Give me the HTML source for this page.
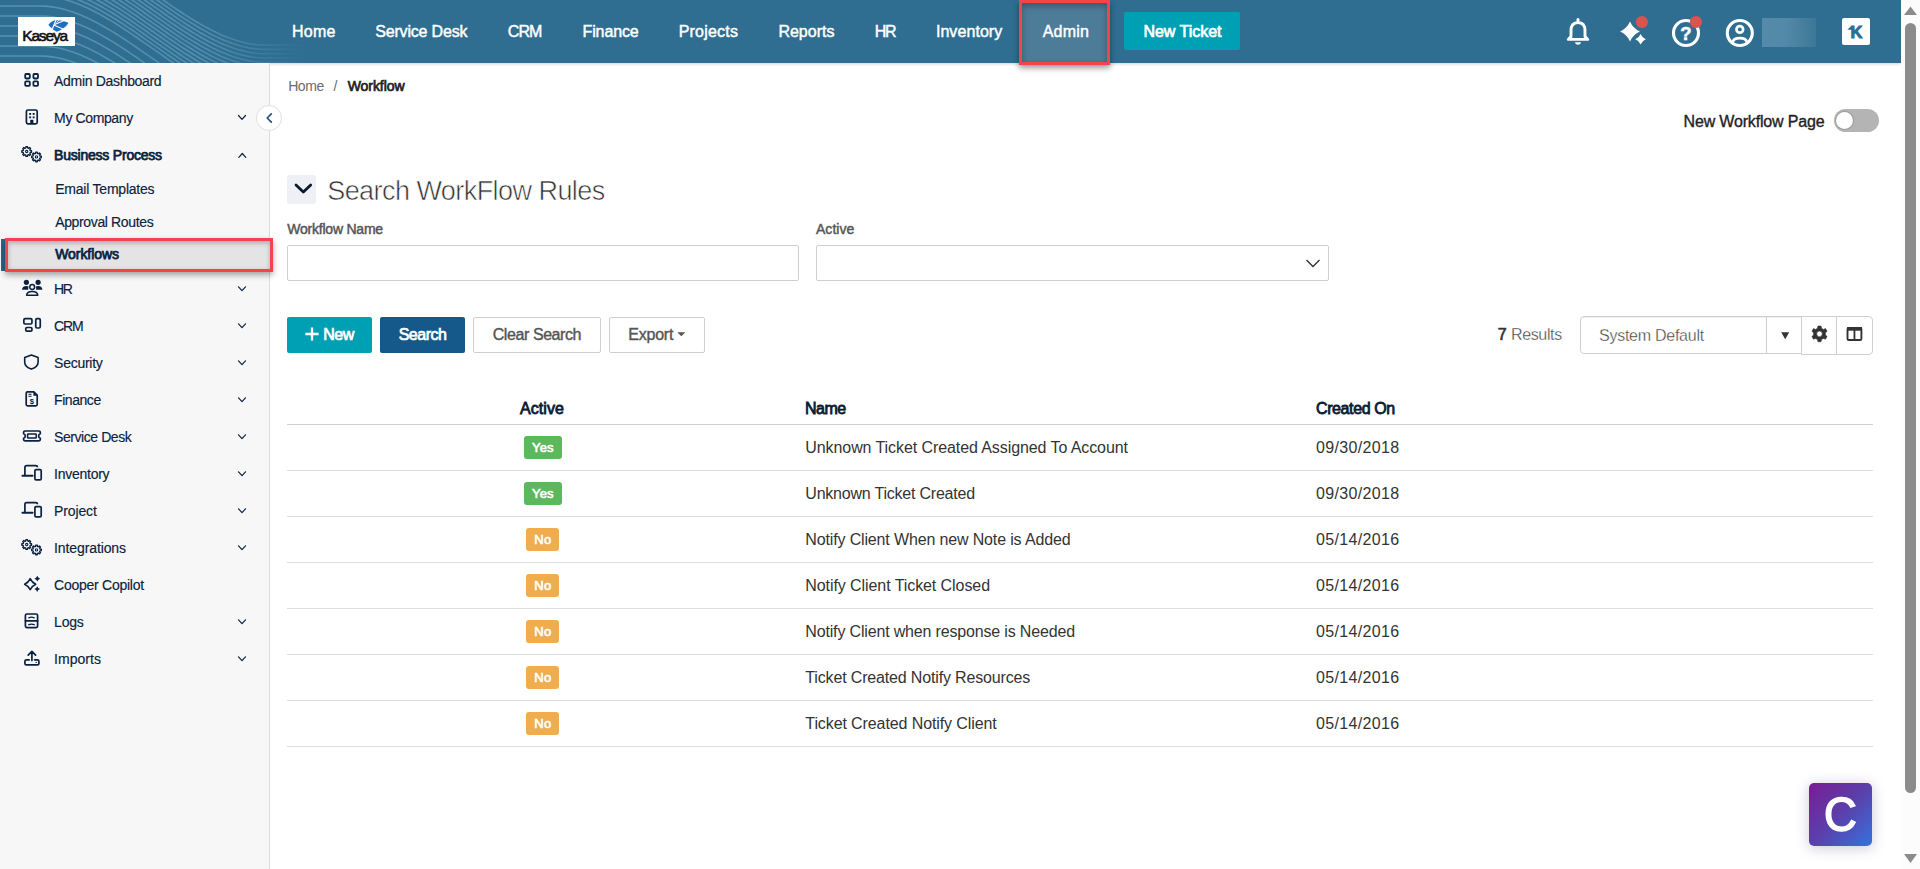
<!DOCTYPE html>
<html lang="en">
<head>
<meta charset="utf-8">
<title>Workflow</title>
<style>
html,body{margin:0;padding:0;}
body{width:1920px;height:869px;overflow:hidden;position:relative;background:#fff;font-family:"Liberation Sans",sans-serif;}
.t{position:absolute;white-space:nowrap;display:block;}
.abs{position:absolute;}
#hdr{left:0;top:0;width:1901px;height:63px;background:#2f6e91;box-shadow:0 1px 3px rgba(0,0,0,.18);}
#side{left:0;top:63px;width:269px;height:806px;background:#f7f7f7;border-right:1px solid #dcdcdc;}
.btn{position:absolute;box-sizing:border-box;border-radius:2px;}
.line{position:absolute;left:287px;width:1586px;height:1px;background:#dedede;}
.badge{position:absolute;border-radius:3px;}
svg{position:absolute;overflow:visible;}
.ic{fill:none;stroke:#0a2240;stroke-width:1.7;stroke-linecap:round;stroke-linejoin:round;}
.chev{fill:none;stroke:#0a2240;stroke-width:1.2;stroke-linecap:round;stroke-linejoin:round;}
</style>
</head>
<body>
<!-- header -->
<div id="hdr" class="abs"></div>
<svg style="left:0;top:0" width="340" height="63" viewBox="0 0 340 63"><defs><linearGradient id="wf" x1="0" x2="1" y1="0" y2="0"><stop offset="0" stop-color="#fff" stop-opacity="1"/><stop offset="0.6" stop-color="#fff" stop-opacity="0.9"/><stop offset="0.9" stop-color="#fff" stop-opacity="0"/></linearGradient><mask id="wm"><rect x="0" y="0" width="340" height="63" fill="url(#wf)"/></mask><clipPath id="wc"><rect x="0" y="0" width="340" height="63"/></clipPath></defs><g clip-path="url(#wc)"><g mask="url(#wm)" fill="none" stroke="#9fd0ea" stroke-opacity="0.36" stroke-width="1.6"><path d="M-4 56.0 L0 56.0 L4 56.0 L8 56.0 L12 56.0 L16 56.0 L20 56.0 L24 56.0 L28 56.0 L32 56.0 L36 56.0 L40 56.0 L44 56.1 L48 56.4 L52 56.9 L56 57.5 L60 58.3 L64 59.3 L68 60.5 L72 61.8 L76 63.2 L80 64.8 L84 66.5 L88 68.3"/><path d="M-4 46.0 L0 46.0 L4 46.0 L8 46.0 L12 46.0 L16 46.0 L20 46.0 L24 46.0 L28 46.0 L32 46.0 L36 46.0 L40 46.0 L44 46.1 L48 46.4 L52 46.9 L56 47.5 L60 48.3 L64 49.3 L68 50.5 L72 51.8 L76 53.2 L80 54.8 L84 56.5 L88 58.3 L92 60.2 L96 62.3 L100 64.4 L104 66.7 L108 69.0"/><path d="M-4 36.0 L0 36.0 L4 36.0 L8 36.0 L12 36.0 L16 36.0 L20 36.0 L24 36.0 L28 36.0 L32 36.0 L36 36.0 L40 36.0 L44 36.1 L48 36.4 L52 36.9 L56 37.5 L60 38.3 L64 39.3 L68 40.5 L72 41.8 L76 43.2 L80 44.8 L84 46.5 L88 48.3 L92 50.2 L96 52.3 L100 54.4 L104 56.7 L108 59.0 L112 61.4 L116 63.8 L120 66.4 L124 69.0"/><path d="M-4 26.0 L0 26.0 L4 26.0 L8 26.0 L12 26.0 L16 26.0 L20 26.0 L24 26.0 L28 26.0 L32 26.0 L36 26.0 L40 26.0 L44 26.1 L48 26.4 L52 26.9 L56 27.5 L60 28.3 L64 29.3 L68 30.5 L72 31.8 L76 33.2 L80 34.8 L84 36.5 L88 38.3 L92 40.2 L96 42.3 L100 44.4 L104 46.7 L108 49.0 L112 51.4 L116 53.8 L120 56.4 L124 59.0 L128 61.6 L132 64.3 L136 67.0 L140 69.8"/><path d="M-4 16.0 L0 16.0 L4 16.0 L8 16.0 L12 16.0 L16 16.0 L20 16.0 L24 16.0 L28 16.0 L32 16.0 L36 16.0 L40 16.0 L44 16.1 L48 16.4 L52 16.9 L56 17.5 L60 18.3 L64 19.3 L68 20.5 L72 21.8 L76 23.2 L80 24.8 L84 26.5 L88 28.3 L92 30.2 L96 32.3 L100 34.4 L104 36.7 L108 39.0 L112 41.4 L116 43.8 L120 46.4 L124 49.0 L128 51.6 L132 54.3 L136 57.0 L140 59.8 L144 62.6 L148 65.4 L152 68.2"/><path d="M-4 6.0 L0 6.0 L4 6.0 L8 6.0 L12 6.0 L16 6.0 L20 6.0 L24 6.0 L28 6.0 L32 6.0 L36 6.0 L40 6.0 L44 6.1 L48 6.4 L52 6.9 L56 7.5 L60 8.3 L64 9.3 L68 10.5 L72 11.8 L76 13.2 L80 14.8 L84 16.5 L88 18.3 L92 20.2 L96 22.3 L100 24.4 L104 26.7 L108 29.0 L112 31.4 L116 33.8 L120 36.4 L124 39.0 L128 41.6 L132 44.3 L136 47.0 L140 49.8 L144 52.6 L148 55.4 L152 58.2 L156 60.9 L160 63.7 L164 66.5 L168 69.3"/><path d="M-4 -4.0 L0 -4.0 L4 -4.0 L8 -4.0 L12 -4.0 L16 -4.0 L20 -4.0 L24 -4.0 L28 -4.0 L32 -4.0 L36 -4.0 L40 -4.0 L44 -3.9 L48 -3.6 L52 -3.1 L56 -2.5 L60 -1.7 L64 -0.7 L68 0.5 L72 1.8 L76 3.2 L80 4.8 L84 6.5 L88 8.3 L92 10.2 L96 12.3 L100 14.4 L104 16.7 L108 19.0 L112 21.4 L116 23.8 L120 26.4 L124 29.0 L128 31.6 L132 34.3 L136 37.0 L140 39.8 L144 42.6 L148 45.4 L152 48.2 L156 50.9 L160 53.7 L164 56.5 L168 59.3 L172 62.0 L176 64.7 L180 67.4 L184 70.0"/><path d="M60 -6.0 L64 -5.0 L68 -3.8 L72 -2.5 L76 -1.1 L80 0.5 L84 2.2 L88 4.0 L92 5.9 L96 8.0 L100 10.1 L104 12.4 L108 14.7 L112 17.1 L116 19.5 L120 22.1 L124 24.7 L128 27.3 L132 30.0 L136 32.7 L140 35.5 L144 38.3 L148 41.1 L152 43.9 L156 46.6 L160 49.4 L164 52.2 L168 55.0 L172 57.7 L176 60.4 L180 63.1 L184 65.7 L188 68.2"/><path d="M76 -5.4 L80 -3.8 L84 -2.1 L88 -0.3 L92 1.6 L96 3.7 L100 5.8 L104 8.1 L108 10.4 L112 12.8 L116 15.2 L120 17.8 L124 20.4 L128 23.0 L132 25.7 L136 28.4 L140 31.2 L144 34.0 L148 36.8 L152 39.6 L156 42.3 L160 45.1 L164 47.9 L168 50.7 L172 53.4 L176 56.1 L180 58.8 L184 61.4 L188 63.9 L192 66.4 L196 68.8"/><path d="M88 -4.6 L92 -2.7 L96 -0.6 L100 1.5 L104 3.8 L108 6.1 L112 8.5 L116 10.9 L120 13.5 L124 16.1 L128 18.7 L132 21.4 L136 24.1 L140 26.9 L144 29.7 L148 32.5 L152 35.3 L156 38.0 L160 40.8 L164 43.6 L168 46.4 L172 49.1 L176 51.8 L180 54.5 L184 57.1 L188 59.6 L192 62.1 L196 64.5 L200 66.9 L204 69.1"/><path d="M96 -4.9 L100 -2.8 L104 -0.5 L108 1.8 L112 4.2 L116 6.6 L120 9.2 L124 11.8 L128 14.4 L132 17.1 L136 19.8 L140 22.6 L144 25.4 L148 28.2 L152 31.0 L156 33.7 L160 36.5 L164 39.3 L168 42.1 L172 44.8 L176 47.5 L180 50.2 L184 52.8 L188 55.3 L192 57.8 L196 60.2 L200 62.6 L204 64.8 L208 67.0 L212 69.1"/><path d="M104 -4.8 L108 -2.5 L112 -0.1 L116 2.3 L120 4.9 L124 7.5 L128 10.1 L132 12.8 L136 15.5 L140 18.3 L144 21.1 L148 23.9 L152 26.7 L156 29.4 L160 32.2 L164 35.0 L168 37.8 L172 40.5 L176 43.2 L180 45.9 L184 48.5 L188 51.0 L192 53.5 L196 55.9 L200 58.3 L204 60.5 L208 62.7 L212 64.8 L216 66.7 L220 68.6"/><path d="M112 -4.4 L116 -2.0 L120 0.6 L124 3.2 L128 5.8 L132 8.5 L136 11.2 L140 14.0 L144 16.8 L148 19.6 L152 22.4 L156 25.1 L160 27.9 L164 30.7 L168 33.5 L172 36.2 L176 38.9 L180 41.6 L184 44.2 L188 46.7 L192 49.2 L196 51.6 L200 54.0 L204 56.2 L208 58.4 L212 60.5 L216 62.4 L220 64.3 L224 66.0 L228 67.6 L232 69.1"/><path d="M120 -3.7 L124 -1.1 L128 1.5 L132 4.2 L136 6.9 L140 9.7 L144 12.5 L148 15.3 L152 18.1 L156 20.8 L160 23.6 L164 26.4 L168 29.2 L172 31.9 L176 34.6 L180 37.3 L184 39.9 L188 42.4 L192 44.9 L196 47.3 L200 49.7 L204 51.9 L208 54.1 L212 56.2 L216 58.1 L220 60.0 L224 61.7 L228 63.3 L232 64.8 L236 66.1 L240 67.3 L244 68.3 L248 69.2 L252 69.9"/><path d="M124 -5.4 L128 -2.8 L132 -0.1 L136 2.6 L140 5.4 L144 8.2 L148 11.0 L152 13.8 L156 16.5 L160 19.3 L164 22.1 L168 24.9 L172 27.6 L176 30.3 L180 33.0 L184 35.6 L188 38.1 L192 40.6 L196 43.0 L200 45.4 L204 47.6 L208 49.8 L212 51.9 L216 53.8 L220 55.7 L224 57.4 L228 59.0 L232 60.5 L236 61.8 L240 63.0 L244 64.0 L248 64.9 L252 65.6 L256 66.1 L260 66.4 L264 66.6 L268 66.6 L272 66.6 L276 66.6 L280 66.6 L284 66.6 L288 66.6 L292 66.6 L296 66.6 L300 66.6 L304 66.6 L308 66.6 L312 66.6 L316 66.6 L320 66.6 L324 66.6 L328 66.6"/><path d="M132 -4.4 L136 -1.7 L140 1.1 L144 3.9 L148 6.7 L152 9.5 L156 12.2 L160 15.0 L164 17.8 L168 20.6 L172 23.3 L176 26.0 L180 28.7 L184 31.3 L188 33.8 L192 36.3 L196 38.7 L200 41.1 L204 43.3 L208 45.5 L212 47.6 L216 49.5 L220 51.4 L224 53.1 L228 54.7 L232 56.2 L236 57.5 L240 58.7 L244 59.7 L248 60.6 L252 61.3 L256 61.8 L260 62.1 L264 62.3 L268 62.3 L272 62.3 L276 62.3 L280 62.3 L284 62.3 L288 62.3 L292 62.3 L296 62.3 L300 62.3 L304 62.3 L308 62.3 L312 62.3 L316 62.3 L320 62.3 L324 62.3 L328 62.3"/><path d="M136 -6.0 L140 -3.2 L144 -0.4 L148 2.4 L152 5.2 L156 7.9 L160 10.7 L164 13.5 L168 16.3 L172 19.0 L176 21.7 L180 24.4 L184 27.0 L188 29.5 L192 32.0 L196 34.4 L200 36.8 L204 39.0 L208 41.2 L212 43.3 L216 45.2 L220 47.1 L224 48.8 L228 50.4 L232 51.9 L236 53.2 L240 54.4 L244 55.4 L248 56.3 L252 57.0 L256 57.5 L260 57.8 L264 58.0 L268 58.0 L272 58.0 L276 58.0 L280 58.0 L284 58.0 L288 58.0 L292 58.0 L296 58.0 L300 58.0 L304 58.0 L308 58.0 L312 58.0 L316 58.0 L320 58.0 L324 58.0 L328 58.0"/><path d="M144 -4.7 L148 -1.9 L152 0.9 L156 3.6 L160 6.4 L164 9.2 L168 12.0 L172 14.7 L176 17.4 L180 20.1 L184 22.7 L188 25.2 L192 27.7 L196 30.1 L200 32.5 L204 34.7 L208 36.9 L212 39.0 L216 40.9 L220 42.8 L224 44.5 L228 46.1 L232 47.6 L236 48.9 L240 50.1 L244 51.1 L248 52.0 L252 52.7 L256 53.2 L260 53.5 L264 53.7 L268 53.7 L272 53.7 L276 53.7 L280 53.7 L284 53.7 L288 53.7 L292 53.7 L296 53.7 L300 53.7 L304 53.7 L308 53.7 L312 53.7 L316 53.7 L320 53.7 L324 53.7 L328 53.7"/><path d="M152 -3.4 L156 -0.7 L160 2.1 L164 4.9 L168 7.7 L172 10.4 L176 13.1 L180 15.8 L184 18.4 L188 20.9 L192 23.4 L196 25.8 L200 28.2 L204 30.4 L208 32.6 L212 34.7 L216 36.6 L220 38.5 L224 40.2 L228 41.8 L232 43.3 L236 44.6 L240 45.8 L244 46.8 L248 47.7 L252 48.4 L256 48.9 L260 49.2 L264 49.4 L268 49.4 L272 49.4 L276 49.4 L280 49.4 L284 49.4 L288 49.4 L292 49.4 L296 49.4 L300 49.4 L304 49.4 L308 49.4 L312 49.4 L316 49.4 L320 49.4 L324 49.4 L328 49.4"/><path d="M156 -5.0 L160 -2.2 L164 0.6 L168 3.4 L172 6.1 L176 8.8 L180 11.5 L184 14.1 L188 16.6 L192 19.1 L196 21.5 L200 23.9 L204 26.1 L208 28.3 L212 30.4 L216 32.3 L220 34.2 L224 35.9 L228 37.5 L232 39.0 L236 40.3 L240 41.5 L244 42.5 L248 43.4 L252 44.1 L256 44.6 L260 44.9 L264 45.1 L268 45.1 L272 45.1 L276 45.1 L280 45.1 L284 45.1 L288 45.1 L292 45.1 L296 45.1 L300 45.1 L304 45.1 L308 45.1 L312 45.1 L316 45.1 L320 45.1 L324 45.1 L328 45.1"/></g></g></svg>
<div class="abs" style="left:1019px;top:0px;width:91px;height:65px;box-sizing:border-box;border:3px solid #f2444a;background:#4d7c99;box-shadow:0 3px 6px rgba(0,0,0,.4), inset 0 3px 6px rgba(0,0,0,.3);"></div>
<div class="btn" style="left:1124px;top:12px;width:116px;height:38px;background:#00a0b4;border-radius:2px;"></div>
<!-- logo -->
<div class="abs" style="left:18px;top:17px;width:57px;height:29px;background:#fff;"></div>
<svg style="left:0;top:0" width="100" height="63"><path d="M48.4 24.8 Q50.2 21.6 55.5 19.9 Q62.9 20.2 68.5 22.7 Q67.2 25.9 62.4 29.1 Q59.2 31.2 56.6 31.7 Q53.4 30.2 51.8 28.3 Q49.4 26.4 48.4 24.8Z" fill="#1f6fbf"/><path d="M56.3 19.4 L52.3 28.9" stroke="#fff" stroke-width="1.2" fill="none"/><path d="M54.6 24.4 L64.2 20.4" stroke="#fff" stroke-width="1.1" fill="none"/><path d="M54.2 25.3 L63.6 29.2" stroke="#fff" stroke-width="1.1" fill="none"/><path d="M56.6 22.4 L59.6 19.8" stroke="#fff" stroke-width="0.9" fill="none"/></svg>
<svg style="left:0;top:0" width="1901" height="66"><path d="M1578 19.6 V21.5" fill="none" stroke="#fff" stroke-width="3" stroke-linecap="round"/><path d="M1568.2 39.4 L1571 36.4 V30.6 Q1571 22.6 1578 22.6 Q1585 22.6 1585 30.6 V36.4 L1587.8 39.4Z" fill="none" stroke="#fff" stroke-width="2.9" stroke-linejoin="round"/><path d="M1574.9 42.3 H1581.1 Q1580.5 44.8 1578 44.8 Q1575.5 44.8 1574.9 42.3Z" fill="#fff"/><path d="M1630 21.6 Q1632.97 28.53 1639.9 31.5 Q1632.97 34.47 1630 41.4 Q1627.03 34.47 1620.1 31.5 Q1627.03 28.53 1630 21.6Z" fill="#fff"/><path d="M1640.6 34.0 Q1642.031 37.869 1645.8999999999999 39.3 Q1642.031 40.730999999999995 1640.6 44.599999999999994 Q1639.1689999999999 40.730999999999995 1635.3 39.3 Q1639.1689999999999 37.869 1640.6 34.0Z" fill="#fff"/><circle cx="1641.9" cy="22" r="6.1" fill="#d9534f"/><circle cx="1686" cy="33" r="12.5" fill="none" stroke="#fff" stroke-width="3.1"/><text x="1686" y="39.7" font-family="Liberation Sans, sans-serif" font-size="18.5" font-weight="700" fill="#fff" stroke="#fff" stroke-width="0.5" text-anchor="middle">?</text><circle cx="1696" cy="22" r="6.1" fill="#d9534f"/><circle cx="1739.8" cy="33" r="12.5" fill="none" stroke="#fff" stroke-width="3.1"/><circle cx="1739.8" cy="29.4" r="3.3" fill="none" stroke="#fff" stroke-width="2.7"/><path d="M1732.6 42.4 Q1733.4 38.2 1739.8 38.2 Q1746.2 38.2 1747 42.4" fill="none" stroke="#fff" stroke-width="2.7" stroke-linecap="round"/></svg>
<div class="abs" style="left:1762px;top:18px;width:54px;height:29px;background:linear-gradient(90deg,#558aaa 0%,#5288a8 45%,#4a809f 70%,#3b7799 100%);filter:blur(0.6px);"></div>
<div class="abs" style="left:1842.3px;top:18.2px;width:27.3px;height:27.2px;border-radius:2px;background:#fff;"></div>
<svg style="left:1842px;top:18px" width="28" height="28"><path d="M5.3 11.7 L9.2 8 H10.6 V11.7Z" fill="#2f6e91"/></svg>
<!-- sidebar -->
<div id="side" class="abs"></div>
<div class="abs" style="left:1px;top:239px;width:4px;height:32px;background:#2b6587;"></div>
<div class="abs" style="left:5px;top:238px;width:268px;height:34px;box-sizing:border-box;border:3px solid #f2444a;background:#e4e4e4;box-shadow:0 3px 6px rgba(0,0,0,.35), inset 0 2px 5px rgba(0,0,0,.25);"></div>
<svg style="left:0;top:0" width="300" height="869"><rect class="ic" x="25.2" y="74.0" width="4.6" height="4.5" rx="0.9" style="stroke-width:1.8"/><rect class="ic" x="33.4" y="74.0" width="4.6" height="4.5" rx="0.9" style="stroke-width:1.8"/><rect class="ic" x="25.2" y="81.3" width="4.6" height="4.5" rx="0.9" style="stroke-width:1.8"/><rect class="ic" x="33.4" y="81.3" width="4.6" height="4.5" rx="0.9" style="stroke-width:1.8"/><rect class="ic" x="26.4" y="110.0" width="10.8" height="13.9" rx="1.6"/><rect x="29.2" y="113.0" width="1.9" height="1.9" fill="#0a2240"/><rect x="32.7" y="113.0" width="1.9" height="1.9" fill="#0a2240"/><rect x="29.2" y="116.4" width="1.9" height="1.9" fill="#0a2240"/><rect x="32.7" y="116.4" width="1.9" height="1.9" fill="#0a2240"/><path d="M30.2 124 V120.6 Q30.2 119.8 31 119.8 H32.6 Q33.4 119.8 33.4 120.6 V124Z" fill="#0a2240"/><path d="M31.54 150.73 L31.54 152.27 L30.21 152.40 L29.82 153.35 L30.66 154.38 L29.58 155.46 L28.55 154.62 L27.60 155.01 L27.47 156.34 L25.93 156.34 L25.80 155.01 L24.85 154.62 L23.82 155.46 L22.74 154.38 L23.58 153.35 L23.19 152.40 L21.86 152.27 L21.86 150.73 L23.19 150.60 L23.58 149.65 L22.74 148.62 L23.82 147.54 L24.85 148.38 L25.80 147.99 L25.93 146.66 L27.47 146.66 L27.60 147.99 L28.55 148.38 L29.58 147.54 L30.66 148.62 L29.82 149.65 L30.21 150.60Z" fill="none" stroke="#0a2240" stroke-width="1.35" stroke-linejoin="round"/><circle cx="26.7" cy="151.5" r="1.15" fill="none" stroke="#0a2240" stroke-width="1.1"/><path d="M41.34 156.13 L41.34 157.67 L40.01 157.80 L39.62 158.75 L40.46 159.78 L39.38 160.86 L38.35 160.02 L37.40 160.41 L37.27 161.74 L35.73 161.74 L35.60 160.41 L34.65 160.02 L33.62 160.86 L32.54 159.78 L33.38 158.75 L32.99 157.80 L31.66 157.67 L31.66 156.13 L32.99 156.00 L33.38 155.05 L32.54 154.02 L33.62 152.94 L34.65 153.78 L35.60 153.39 L35.73 152.06 L37.27 152.06 L37.40 153.39 L38.35 153.78 L39.38 152.94 L40.46 154.02 L39.62 155.05 L40.01 156.00Z" fill="none" stroke="#0a2240" stroke-width="1.35" stroke-linejoin="round"/><circle cx="36.5" cy="156.9" r="1.15" fill="none" stroke="#0a2240" stroke-width="1.1"/><circle cx="26.4" cy="282.3" r="2.6" fill="#0a2240"/><circle cx="38.1" cy="282.3" r="2.6" fill="#0a2240"/><circle cx="32.2" cy="287" r="2.4" fill="none" stroke="#0a2240" stroke-width="1.5"/><path d="M22 289.8 Q22.2 286 26.2 286 Q28 286 28.6 286.6 Q28 288 28.3 289.8Z" fill="#0a2240"/><path d="M42.4 289.8 Q42.2 286 38.2 286 Q36.4 286 35.8 286.6 Q36.4 288 36.1 289.8Z" fill="#0a2240"/><path d="M26.6 295.3 Q27 291.5 32.2 291.5 Q37.4 291.5 37.8 295.3Z" fill="none" stroke="#0a2240" stroke-width="1.5" stroke-linejoin="round"/><rect class="ic" x="23.85" y="318.7" width="8.1" height="5.3" rx="1.3"/><rect class="ic" x="35.75" y="318.6" width="4.5" height="9.4" rx="1.3"/><rect class="ic" x="25.75" y="327.5" width="6.2" height="3.6" rx="1.2"/><path class="ic" d="M31.4 355 L38.1 357.6 V362.2 Q38.1 366.6 31.4 369.1 Q24.7 366.6 24.7 362.2 V357.6Z" style="stroke-width:1.6"/><path class="ic" d="M27.6 391.8 H33.8 L37.2 395.2 V404.6 Q37.2 405.9 35.9 405.9 H27.6 Q26.2 405.9 26.2 404.6 V393.2 Q26.2 391.8 27.6 391.8Z"/><path d="M33.4 391.6 L37.5 395.7 H33.4Z" fill="#0a2240"/><path d="M28.4 394.2 H31.6 M28.4 396.3 H31.6" stroke="#0a2240" stroke-width="1.1" fill="none"/><text x="31.8" y="404.3" font-family="Liberation Sans, sans-serif" font-size="7.5" font-weight="700" fill="#0a2240" text-anchor="middle">$</text><path class="ic" d="M25 431 H38.9 Q40.3 431 40.3 432.3 V433.8 Q38.6 434.3 38.6 436 Q38.6 437.7 40.3 438.2 V439.6 Q40.3 440.9 38.9 440.9 H25 Q23.6 440.9 23.6 439.6 V438.2 Q25.3 437.7 25.3 436 Q25.3 434.3 23.6 433.8 V432.3 Q23.6 431 25 431Z"/><rect class="ic" x="27.6" y="434" width="8.6" height="3.9" rx="0.5" style="stroke-width:1.5"/><path class="ic" d="M24.9 475.6 V467.4 Q24.9 465.7 26.6 465.7 H35.8 Q37.5 465.7 37.5 467.2" style="stroke-linecap:butt"/><path class="ic" d="M22.4 475.7 H32.6" style="stroke-width:1.9"/><rect class="ic" x="34.9" y="469.6" width="6.3" height="10.3" rx="1.2"/><path class="ic" d="M24.9 512.6 V504.4 Q24.9 502.7 26.6 502.7 H35.8 Q37.5 502.7 37.5 504.2" style="stroke-linecap:butt"/><path class="ic" d="M22.4 512.7 H32.6" style="stroke-width:1.9"/><rect class="ic" x="34.9" y="506.6" width="6.3" height="10.3" rx="1.2"/><path d="M31.54 543.73 L31.54 545.27 L30.21 545.40 L29.82 546.35 L30.66 547.38 L29.58 548.46 L28.55 547.62 L27.60 548.01 L27.47 549.34 L25.93 549.34 L25.80 548.01 L24.85 547.62 L23.82 548.46 L22.74 547.38 L23.58 546.35 L23.19 545.40 L21.86 545.27 L21.86 543.73 L23.19 543.60 L23.58 542.65 L22.74 541.62 L23.82 540.54 L24.85 541.38 L25.80 540.99 L25.93 539.66 L27.47 539.66 L27.60 540.99 L28.55 541.38 L29.58 540.54 L30.66 541.62 L29.82 542.65 L30.21 543.60Z" fill="none" stroke="#0a2240" stroke-width="1.35" stroke-linejoin="round"/><circle cx="26.7" cy="544.5" r="1.15" fill="none" stroke="#0a2240" stroke-width="1.1"/><path d="M41.34 549.13 L41.34 550.67 L40.01 550.80 L39.62 551.75 L40.46 552.78 L39.38 553.86 L38.35 553.02 L37.40 553.41 L37.27 554.74 L35.73 554.74 L35.60 553.41 L34.65 553.02 L33.62 553.86 L32.54 552.78 L33.38 551.75 L32.99 550.80 L31.66 550.67 L31.66 549.13 L32.99 549.00 L33.38 548.05 L32.54 547.02 L33.62 545.94 L34.65 546.78 L35.60 546.39 L35.73 545.06 L37.27 545.06 L37.40 546.39 L38.35 546.78 L39.38 545.94 L40.46 547.02 L39.62 548.05 L40.01 549.00Z" fill="none" stroke="#0a2240" stroke-width="1.35" stroke-linejoin="round"/><circle cx="36.5" cy="549.9" r="1.15" fill="none" stroke="#0a2240" stroke-width="1.1"/><path d="M30.2 578.6 Q31.88 582.5200000000001 35.8 584.2 Q31.88 585.88 30.2 589.8000000000001 Q28.52 585.88 24.6 584.2 Q28.52 582.5200000000001 30.2 578.6Z" fill="none" stroke="#0a2240" stroke-width="1.5" stroke-linejoin="round"/><path d="M37.3 575.8000000000001 Q37.937999999999995 578.062 40.199999999999996 578.7 Q37.937999999999995 579.3380000000001 37.3 581.6 Q36.662 579.3380000000001 34.4 578.7 Q36.662 578.062 37.3 575.8000000000001Z" fill="#0a2240"/><path d="M37.2 586.2 Q37.838 588.462 40.1 589.1 Q37.838 589.738 37.2 592.0 Q36.562000000000005 589.738 34.300000000000004 589.1 Q36.562000000000005 588.462 37.2 586.2Z" fill="#0a2240"/><rect class="ic" x="25.4" y="614" width="12.2" height="13.6" rx="1.5"/><path class="ic" d="M25.4 620.8 H37.6" /><path d="M28.8 617.8 Q31.5 616.6 34.2 617.8 M28.8 624.7 Q31.5 623.5 34.2 624.7" fill="none" stroke="#0a2240" stroke-width="1.3" stroke-linecap="round"/><path class="ic" d="M31.9 660.4 V651.6 M28.2 655.2 L31.9 651.4 L35.6 655.2"/><path class="ic" d="M29.2 659.8 H26.4 Q24.9 659.8 24.9 661.3 V663.4 Q24.9 664.9 26.4 664.9 H37.4 Q38.9 664.9 38.9 663.4 V661.3 Q38.9 659.8 37.4 659.8 H34.6"/><circle cx="36.2" cy="662.4" r="0.7" fill="#0a2240"/><path class="chev" d="M238.5 115.5 L242 119.30000000000001 L245.5 115.5"/><path class="chev" d="M238.5 286.8 L242 290.59999999999997 L245.5 286.8"/><path class="chev" d="M238.5 323.8 L242 327.59999999999997 L245.5 323.8"/><path class="chev" d="M238.5 360.8 L242 364.59999999999997 L245.5 360.8"/><path class="chev" d="M238.5 397.8 L242 401.59999999999997 L245.5 397.8"/><path class="chev" d="M238.5 434.8 L242 438.59999999999997 L245.5 434.8"/><path class="chev" d="M238.5 471.8 L242 475.59999999999997 L245.5 471.8"/><path class="chev" d="M238.5 508.8 L242 512.6 L245.5 508.8"/><path class="chev" d="M238.5 545.8000000000001 L242 549.6 L245.5 545.8000000000001"/><path class="chev" d="M238.5 619.8000000000001 L242 623.6 L245.5 619.8000000000001"/><path class="chev" d="M238.5 656.8000000000001 L242 660.6 L245.5 656.8000000000001"/><path class="chev" d="M238.8 157.3 L242.3 153.5 L245.8 157.3"/></svg>
<!-- collapse button -->
<div class="abs" style="left:256px;top:105px;width:26px;height:26px;box-sizing:border-box;border-radius:50%;background:#fff;border:1px solid #e0e0e0;"></div>
<svg style="left:256px;top:105px" width="26" height="26"><path d="M15.3 8.8 L11.2 13 L15.3 17.2" fill="none" stroke="#24507a" stroke-width="1.7" stroke-linecap="round" stroke-linejoin="round"/></svg>
<!-- main -->
<div class="abs" style="left:1834px;top:109px;width:45px;height:23px;border-radius:12px;background:#b4b4b4;"></div>
<div class="abs" style="left:1836px;top:112px;width:17px;height:17px;border-radius:50%;background:#fff;box-shadow:0 0 0 1px #9a9a9a;"></div>
<div class="abs" style="left:287px;top:175px;width:29px;height:29px;border-radius:3px;background:#eef0f5;"></div>
<svg style="left:287px;top:175px" width="29" height="28"><path d="M9 9.9 L16.35 17.1 L23.7 9.9" fill="none" stroke="#0a1a33" stroke-width="2.8" stroke-linecap="round" stroke-linejoin="round"/></svg>
<div class="btn" style="left:287px;top:245px;width:512px;height:36px;border:1px solid #cfcfcf;background:#fff;"></div>
<div class="btn" style="left:816px;top:245px;width:513px;height:36px;border:1px solid #cfcfcf;background:#fff;"></div>
<svg style="left:1304px;top:257px" width="18" height="12"><path d="M2.5 3 L9 9.5 L15.5 3" fill="none" stroke="#333" stroke-width="1.4"/></svg>
<!-- buttons -->
<div class="btn" style="left:287px;top:317px;width:85px;height:36px;background:#00a0b4;"></div>
<svg style="left:304.6px;top:327.4px" width="14" height="14"><path d="M7 0.4 V13.6 M0.4 7 H13.6" stroke="#fff" stroke-width="2.3" fill="none"/></svg>
<div class="btn" style="left:380px;top:317px;width:85px;height:36px;background:#14598a;"></div>
<div class="btn" style="left:473px;top:317px;width:128px;height:36px;background:#fff;border:1px solid #cfcfcf;"></div>
<div class="btn" style="left:609px;top:317px;width:96px;height:36px;background:#fff;border:1px solid #cfcfcf;"></div>
<svg style="left:677px;top:332px" width="9" height="5"><path d="M0.3 0.3 H8.3 L4.3 4.3 Z" fill="#555"/></svg>
<!-- view selector -->
<div class="btn" style="left:1580px;top:316px;width:222px;height:38px;background:#fff;border:1px solid #cfcfcf;border-radius:4px 0 0 4px;box-shadow:inset 0 1px 1px rgba(0,0,0,.075);"></div>
<div class="abs" style="left:1766px;top:317px;width:1px;height:36px;background:#cfcfcf;"></div>
<svg style="left:1781.2px;top:331.6px" width="9" height="8"><path d="M0.2 0.3 H8.2 L4.2 7.3 Z" fill="#333"/></svg>
<div class="btn" style="left:1801px;top:316px;width:36px;height:39px;background:#fff;border:1px solid #cfcfcf;border-radius:0;"></div>
<div class="btn" style="left:1836px;top:316px;width:37px;height:39px;background:#fff;border:1px solid #cfcfcf;border-radius:0 4px 4px 0;"></div>
<svg style="left:0;top:0" width="1901" height="400"><path d="M1817.92 326.06 L1821.08 326.06 L1821.41 328.21 L1823.47 329.40 L1825.50 328.61 L1827.08 331.35 L1825.38 332.71 L1825.38 335.09 L1827.08 336.45 L1825.50 339.19 L1823.47 338.40 L1821.41 339.59 L1821.08 341.74 L1817.92 341.74 L1817.59 339.59 L1815.53 338.40 L1813.50 339.19 L1811.92 336.45 L1813.62 335.09 L1813.62 332.71 L1811.92 331.35 L1813.50 328.61 L1815.53 329.40 L1817.59 328.21Z M1822.3 333.9 A2.8 2.8 0 1 0 1816.7 333.9 A2.8 2.8 0 1 0 1822.3 333.9Z" fill="#333" fill-rule="evenodd" stroke="#333" stroke-width="0.6" stroke-linejoin="round"/><rect x="1847.5" y="328" width="13.9" height="12" rx="1.3" fill="none" stroke="#333" stroke-width="1.9"/><path d="M1847 328.9 H1862" stroke="#333" stroke-width="3.6"/><path d="M1854.45 329 V340.5" stroke="#333" stroke-width="1.8"/></svg>
<!-- table -->
<div class="line" style="top:424px;background:#cfcfcf;"></div>
<div class="line" style="top:470px;"></div>
<div class="line" style="top:516px;"></div>
<div class="line" style="top:562px;"></div>
<div class="line" style="top:608px;"></div>
<div class="line" style="top:654px;"></div>
<div class="line" style="top:700px;"></div>
<div class="line" style="top:746px;"></div>
<div class="badge" style="left:524px;top:436.0px;width:38px;height:23px;background:#5cb85c;"></div>
<div class="badge" style="left:524px;top:482.0px;width:38px;height:23px;background:#5cb85c;"></div>
<div class="badge" style="left:526px;top:528.0px;width:33px;height:23px;background:#f0ad4e;"></div>
<div class="badge" style="left:526px;top:574.0px;width:33px;height:23px;background:#f0ad4e;"></div>
<div class="badge" style="left:526px;top:620.0px;width:33px;height:23px;background:#f0ad4e;"></div>
<div class="badge" style="left:526px;top:666.0px;width:33px;height:23px;background:#f0ad4e;"></div>
<div class="badge" style="left:526px;top:712.0px;width:33px;height:23px;background:#f0ad4e;"></div>
<!-- chat button -->
<div class="abs" style="left:1809px;top:783px;width:63px;height:63px;border-radius:5px;background:linear-gradient(135deg,#7a1c93 0%,#5a40ab 50%,#3572dd 100%);box-shadow:0 2px 14px rgba(60,60,110,.28);"></div>
<!-- scrollbar -->
<div class="abs" style="left:1901px;top:0;width:19px;height:869px;background:#fcfcfc;"></div>
<div class="abs" style="left:1905px;top:23px;width:11px;height:770px;border-radius:6px;background:#8b8b8b;"></div>
<svg style="left:1904px;top:6px" width="13" height="9"><path d="M0 9 L6.5 0.5 L13 9 Z" fill="#8b8b8b"/></svg>
<svg style="left:1904px;top:854.4px" width="13" height="9"><path d="M0 0 L6.5 9 L13 0 Z" fill="#8b8b8b"/></svg>
<span class="t" style="left:292.00px;top:20.50px;font-size:16px;line-height:21px;color:#fff;-webkit-text-stroke:0.45px #fff;letter-spacing:0.232px;">Home</span>
<span class="t" style="left:375.20px;top:20.50px;font-size:16px;line-height:21px;color:#fff;-webkit-text-stroke:0.45px #fff;letter-spacing:-0.170px;">Service Desk</span>
<span class="t" style="left:507.70px;top:20.50px;font-size:16px;line-height:21px;color:#fff;-webkit-text-stroke:0.45px #fff;letter-spacing:-0.855px;">CRM</span>
<span class="t" style="left:582.50px;top:20.50px;font-size:16px;line-height:21px;color:#fff;-webkit-text-stroke:0.45px #fff;letter-spacing:-0.111px;">Finance</span>
<span class="t" style="left:678.70px;top:20.50px;font-size:16px;line-height:21px;color:#fff;-webkit-text-stroke:0.45px #fff;letter-spacing:0.200px;">Projects</span>
<span class="t" style="left:778.40px;top:20.50px;font-size:16px;line-height:21px;color:#fff;-webkit-text-stroke:0.45px #fff;letter-spacing:0.011px;">Reports</span>
<span class="t" style="left:874.80px;top:20.50px;font-size:16px;line-height:21px;color:#fff;-webkit-text-stroke:0.45px #fff;letter-spacing:-1.406px;">HR</span>
<span class="t" style="left:935.90px;top:20.50px;font-size:16px;line-height:21px;color:#fff;-webkit-text-stroke:0.45px #fff;letter-spacing:0.069px;">Inventory</span>
<span class="t" style="left:1042.70px;top:20.50px;font-size:16px;line-height:21px;color:#fff;-webkit-text-stroke:0.45px #fff;letter-spacing:0.187px;">Admin</span>
<span class="t" style="left:1143.40px;top:20.50px;font-size:16px;line-height:21px;color:#fff;-webkit-text-stroke:0.7px #fff;letter-spacing:-0.016px;">New Ticket</span>
<span class="t" style="left:288.20px;top:77.00px;font-size:14px;line-height:18px;color:#6b6b6b;letter-spacing:-0.446px;">Home</span>
<span class="t" style="left:333.50px;top:77.00px;font-size:14px;line-height:18px;color:#6b6b6b;">/</span>
<span class="t" style="left:347.70px;top:77.00px;font-size:14px;line-height:18px;color:#222;-webkit-text-stroke:0.7px #222;letter-spacing:-0.068px;">Workflow</span>
<span class="t" style="left:54.10px;top:71.70px;font-size:14px;line-height:18px;color:#0a2240;-webkit-text-stroke:0.15px #0a2240;letter-spacing:-0.322px;">Admin Dashboard</span>
<span class="t" style="left:54.10px;top:108.70px;font-size:14px;line-height:18px;color:#0a2240;-webkit-text-stroke:0.15px #0a2240;letter-spacing:-0.376px;">My Company</span>
<span class="t" style="left:54.10px;top:145.70px;font-size:14px;line-height:18px;color:#0a2240;-webkit-text-stroke:0.75px #0a2240;letter-spacing:-0.218px;">Business Process</span>
<span class="t" style="left:55.20px;top:180.00px;font-size:14px;line-height:18px;color:#0a2240;-webkit-text-stroke:0.15px #0a2240;letter-spacing:-0.217px;">Email Templates</span>
<span class="t" style="left:55.20px;top:213.00px;font-size:14px;line-height:18px;color:#0a2240;-webkit-text-stroke:0.15px #0a2240;letter-spacing:-0.360px;">Approval Routes</span>
<span class="t" style="left:55.20px;top:245.30px;font-size:14px;line-height:18px;color:#0a2240;-webkit-text-stroke:0.75px #0a2240;letter-spacing:-0.060px;">Workflows</span>
<span class="t" style="left:54.10px;top:280.00px;font-size:14px;line-height:18px;color:#0a2240;-webkit-text-stroke:0.15px #0a2240;letter-spacing:-1.356px;">HR</span>
<span class="t" style="left:54.10px;top:317.00px;font-size:14px;line-height:18px;color:#0a2240;-webkit-text-stroke:0.15px #0a2240;letter-spacing:-1.196px;">CRM</span>
<span class="t" style="left:54.10px;top:354.00px;font-size:14px;line-height:18px;color:#0a2240;-webkit-text-stroke:0.15px #0a2240;letter-spacing:-0.264px;">Security</span>
<span class="t" style="left:54.10px;top:391.00px;font-size:14px;line-height:18px;color:#0a2240;-webkit-text-stroke:0.15px #0a2240;letter-spacing:-0.448px;">Finance</span>
<span class="t" style="left:54.10px;top:428.00px;font-size:14px;line-height:18px;color:#0a2240;-webkit-text-stroke:0.15px #0a2240;letter-spacing:-0.441px;">Service Desk</span>
<span class="t" style="left:54.10px;top:465.00px;font-size:14px;line-height:18px;color:#0a2240;-webkit-text-stroke:0.15px #0a2240;letter-spacing:-0.258px;">Inventory</span>
<span class="t" style="left:54.10px;top:502.00px;font-size:14px;line-height:18px;color:#0a2240;-webkit-text-stroke:0.15px #0a2240;letter-spacing:-0.150px;">Project</span>
<span class="t" style="left:54.10px;top:539.00px;font-size:14px;line-height:18px;color:#0a2240;-webkit-text-stroke:0.15px #0a2240;letter-spacing:-0.111px;">Integrations</span>
<span class="t" style="left:54.10px;top:576.00px;font-size:14px;line-height:18px;color:#0a2240;-webkit-text-stroke:0.15px #0a2240;letter-spacing:-0.259px;">Cooper Copilot</span>
<span class="t" style="left:54.10px;top:613.00px;font-size:14px;line-height:18px;color:#0a2240;-webkit-text-stroke:0.15px #0a2240;letter-spacing:-0.217px;">Logs</span>
<span class="t" style="left:54.10px;top:650.00px;font-size:14px;line-height:18px;color:#0a2240;-webkit-text-stroke:0.15px #0a2240;letter-spacing:0.033px;">Imports</span>
<span class="t" style="left:1683.50px;top:110.50px;font-size:16px;line-height:21px;color:#222;-webkit-text-stroke:0.35px #222;letter-spacing:-0.162px;">New Workflow Page</span>
<span class="t" style="left:327.20px;top:173.90px;font-size:27px;line-height:35px;color:#333;letter-spacing:-0.551px;-webkit-text-stroke:0.6px #fff;">Search WorkFlow Rules</span>
<span class="t" style="left:287.30px;top:220.00px;font-size:14px;line-height:18px;color:#555;-webkit-text-stroke:0.45px #555;letter-spacing:-0.228px;">Workflow Name</span>
<span class="t" style="left:816.00px;top:220.00px;font-size:14px;line-height:18px;color:#555;-webkit-text-stroke:0.45px #555;letter-spacing:0.032px;">Active</span>
<span class="t" style="left:323.30px;top:323.80px;font-size:16px;line-height:21px;color:#fff;-webkit-text-stroke:0.7px #fff;letter-spacing:-0.526px;">New</span>
<span class="t" style="left:398.70px;top:323.80px;font-size:16px;line-height:21px;color:#fff;-webkit-text-stroke:0.7px #fff;letter-spacing:-0.491px;">Search</span>
<span class="t" style="left:492.70px;top:323.80px;font-size:16px;line-height:21px;color:#555;-webkit-text-stroke:0.4px #555;letter-spacing:-0.415px;">Clear Search</span>
<span class="t" style="left:628.30px;top:323.80px;font-size:16px;line-height:21px;color:#555;-webkit-text-stroke:0.4px #555;letter-spacing:-0.227px;">Export</span>
<span class="t" style="left:1497.70px;top:324.00px;font-size:16px;line-height:21px;color:#333;-webkit-text-stroke:0.7px #333;">7</span>
<span class="t" style="left:1511.00px;top:324.00px;font-size:16px;line-height:21px;color:#3a3a3a;letter-spacing:-0.363px;-webkit-text-stroke:0.35px #fff;">Results</span>
<span class="t" style="left:1599.00px;top:325.00px;font-size:16px;line-height:21px;color:#3a3a3a;letter-spacing:-0.258px;-webkit-text-stroke:0.35px #fff;">System Default</span>
<span class="t" style="left:520.00px;top:397.50px;font-size:16px;line-height:21px;color:#0a1a33;-webkit-text-stroke:0.8px #0a1a33;letter-spacing:0.077px;">Active</span>
<span class="t" style="left:805.00px;top:397.50px;font-size:16px;line-height:21px;color:#0a1a33;-webkit-text-stroke:0.8px #0a1a33;letter-spacing:-0.482px;">Name</span>
<span class="t" style="left:1316.00px;top:397.50px;font-size:16px;line-height:21px;color:#0a1a33;-webkit-text-stroke:0.8px #0a1a33;letter-spacing:-0.391px;">Created On</span>
<span class="t" style="left:532.00px;top:438.80px;font-size:13px;line-height:17px;color:#fff;-webkit-text-stroke:0.6px #fff;letter-spacing:0.193px;">Yes</span>
<span class="t" style="left:805.30px;top:436.80px;font-size:16px;line-height:21px;color:#333;letter-spacing:-0.083px;">Unknown Ticket Created Assigned To Account</span>
<span class="t" style="left:1316.00px;top:436.80px;font-size:16px;line-height:21px;color:#333;letter-spacing:0.339px;">09/30/2018</span>
<span class="t" style="left:532.00px;top:484.80px;font-size:13px;line-height:17px;color:#fff;-webkit-text-stroke:0.6px #fff;letter-spacing:0.193px;">Yes</span>
<span class="t" style="left:805.30px;top:482.80px;font-size:16px;line-height:21px;color:#333;letter-spacing:-0.215px;">Unknown Ticket Created</span>
<span class="t" style="left:1316.00px;top:482.80px;font-size:16px;line-height:21px;color:#333;letter-spacing:0.339px;">09/30/2018</span>
<span class="t" style="left:534.30px;top:530.80px;font-size:13px;line-height:17px;color:#fff;-webkit-text-stroke:0.6px #fff;letter-spacing:0.250px;">No</span>
<span class="t" style="left:805.30px;top:528.80px;font-size:16px;line-height:21px;color:#333;letter-spacing:-0.145px;">Notify Client When new Note is Added</span>
<span class="t" style="left:1316.00px;top:528.80px;font-size:16px;line-height:21px;color:#333;letter-spacing:0.339px;">05/14/2016</span>
<span class="t" style="left:534.30px;top:576.80px;font-size:13px;line-height:17px;color:#fff;-webkit-text-stroke:0.6px #fff;letter-spacing:0.250px;">No</span>
<span class="t" style="left:805.30px;top:574.80px;font-size:16px;line-height:21px;color:#333;letter-spacing:-0.077px;">Notify Client Ticket Closed</span>
<span class="t" style="left:1316.00px;top:574.80px;font-size:16px;line-height:21px;color:#333;letter-spacing:0.339px;">05/14/2016</span>
<span class="t" style="left:534.30px;top:622.80px;font-size:13px;line-height:17px;color:#fff;-webkit-text-stroke:0.6px #fff;letter-spacing:0.250px;">No</span>
<span class="t" style="left:805.30px;top:620.80px;font-size:16px;line-height:21px;color:#333;letter-spacing:-0.164px;">Notify Client when response is Needed</span>
<span class="t" style="left:1316.00px;top:620.80px;font-size:16px;line-height:21px;color:#333;letter-spacing:0.339px;">05/14/2016</span>
<span class="t" style="left:534.30px;top:668.80px;font-size:13px;line-height:17px;color:#fff;-webkit-text-stroke:0.6px #fff;letter-spacing:0.250px;">No</span>
<span class="t" style="left:805.30px;top:666.80px;font-size:16px;line-height:21px;color:#333;letter-spacing:-0.155px;">Ticket Created Notify Resources</span>
<span class="t" style="left:1316.00px;top:666.80px;font-size:16px;line-height:21px;color:#333;letter-spacing:0.339px;">05/14/2016</span>
<span class="t" style="left:534.30px;top:714.80px;font-size:13px;line-height:17px;color:#fff;-webkit-text-stroke:0.6px #fff;letter-spacing:0.250px;">No</span>
<span class="t" style="left:805.30px;top:712.80px;font-size:16px;line-height:21px;color:#333;letter-spacing:-0.100px;">Ticket Created Notify Client</span>
<span class="t" style="left:1316.00px;top:712.80px;font-size:16px;line-height:21px;color:#333;letter-spacing:0.339px;">05/14/2016</span>
<span class="t" style="left:22.20px;top:26.40px;font-size:15.5px;line-height:20px;color:#111;-webkit-text-stroke:0.6px #111;letter-spacing:-1.146px;">Kaseya</span>
<span class="t" style="left:1824.00px;top:784.20px;font-size:47px;line-height:61px;color:#fff;-webkit-text-stroke:1.6px #fff;transform:scale(0.965,1.03);transform-origin:0 50%;">C</span>
<span class="t" style="left:1850.50px;top:22.30px;font-size:16.5px;line-height:21px;color:#2f6e91;-webkit-text-stroke:0.9px #2f6e91;font-weight:700;">K</span>
</body>
</html>
